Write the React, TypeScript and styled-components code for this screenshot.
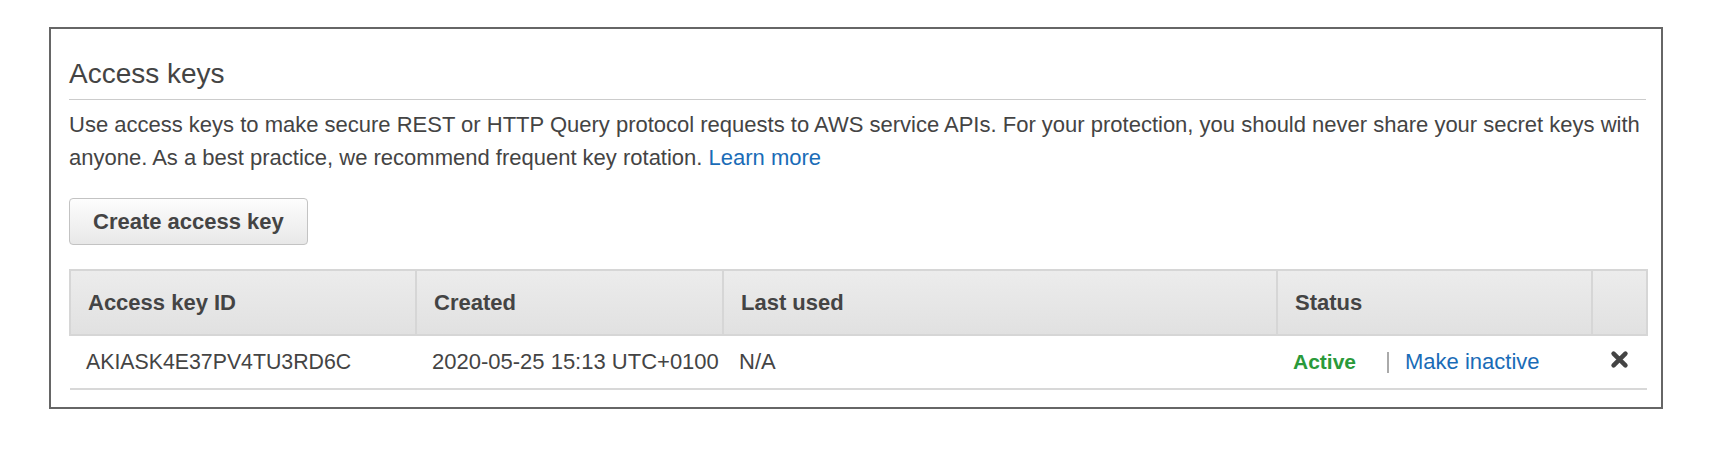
import React from "react";
import styled, { createGlobalStyle } from "styled-components";

interface AccessKey {
  id: string;
  created: string;
  lastUsed: string;
  active: boolean;
}

const keys: AccessKey[] = [
  {
    id: "AKIASK4E37PV4TU3RD6C",
    created: "2020-05-25 15:13 UTC+0100",
    lastUsed: "N/A",
    active: true,
  },
];

const columns = [
  { label: "Access key ID", width: 346 },
  { label: "Created", width: 307 },
  { label: "Last used", width: 554 },
  { label: "Status", width: 315 },
  { label: "", width: 55 },
];

const GlobalStyle = createGlobalStyle`
  html, body {
    margin: 0;
    padding: 0;
    background: #fff;
  }
  body {
    font-family: "Liberation Sans", Arial, Helvetica, sans-serif;
    color: #444;
  }
`;

const RemoveIcon = () => (
  <svg width="19" height="19" viewBox="0 0 16 16" aria-hidden="true">
    <path
      d="M3 3 L13 13 M13 3 L3 13"
      stroke="#444"
      strokeWidth="3.8"
      strokeLinecap="round"
    />
  </svg>
);

const App: React.FC = () => {
  return (
    <>
      <GlobalStyle />
      <Page>
        <Panel>
          <PanelTitle>Access keys</PanelTitle>
          <Description>
            Use access keys to make secure REST or HTTP Query protocol requests
            to AWS service APIs. For your protection, you should never share
            your secret keys with anyone. As a best practice, we recommend
            frequent key rotation. <TextLink href="#">Learn more</TextLink>
          </Description>
          <CreateButton type="button">Create access key</CreateButton>
          <KeyTable>
            <colgroup>
              {columns.map((col, index) => (
                <col key={index} style={{ width: col.width }} />
              ))}
            </colgroup>
            <thead>
              <tr>
                {columns.map((col, index) => (
                  <HeadCell key={index}>{col.label}</HeadCell>
                ))}
              </tr>
            </thead>
            <tbody>
              {keys.map((key) => (
                <tr key={key.id}>
                  <KeyIdCell>{key.id}</KeyIdCell>
                  <BodyCell>{key.created}</BodyCell>
                  <BodyCell>{key.lastUsed}</BodyCell>
                  <BodyCell>
                    <StatusBox>
                      <StatusText $active={key.active}>
                        {key.active ? "Active" : "Inactive"}
                      </StatusText>
                      <Divider />
                      <TextLink href="#">
                        {key.active ? "Make inactive" : "Make active"}
                      </TextLink>
                    </StatusBox>
                  </BodyCell>
                  <IconCell>
                    <DeleteButton type="button" aria-label="Delete">
                      <RemoveIcon />
                    </DeleteButton>
                  </IconCell>
                </tr>
              ))}
            </tbody>
          </KeyTable>
        </Panel>
      </Page>
    </>
  );
};

const Page = styled.div`
  padding: 27px 0 0 49px;
`;

const Panel = styled.section`
  width: 1614px;
  box-sizing: border-box;
  border: 2px solid #666;
  padding: 29px 15px 17px 18px;
`;

const PanelTitle = styled.h2`
  margin: 0;
  padding-bottom: 9px;
  border-bottom: 1px solid #ccc;
  font-size: 28px;
  font-weight: 400;
  line-height: 32px;
  color: #444;
`;

const Description = styled.p`
  margin: 8px 0 0;
  font-size: 22px;
  line-height: 33px;
  color: #444;
`;

const TextLink = styled.a`
  color: #1a6cb7;
  text-decoration: none;
  &:hover {
    text-decoration: underline;
  }
`;

const CreateButton = styled.button`
  display: block;
  height: 47px;
  margin-top: 24px;
  padding: 0 23px;
  border: 1px solid #c3c3c3;
  border-radius: 4px;
  background: linear-gradient(#fdfdfd, #e8e8e8);
  font-family: inherit;
  font-size: 22px;
  font-weight: 700;
  color: #444;
  cursor: pointer;
`;

const KeyTable = styled.table`
  width: 100%;
  margin-top: 24px;
  border-collapse: collapse;
  table-layout: fixed;
`;

const HeadCell = styled.th`
  height: 63px;
  padding: 0 17px;
  border: 2px solid #d6d6d6;
  background: linear-gradient(#ececec, #e1e1e1);
  text-align: left;
  font-size: 22px;
  font-weight: 700;
  color: #444;
`;

const BodyCell = styled.td`
  height: 52px;
  padding: 0 16px;
  border-bottom: 2px solid #d8d8d8;
  font-size: 22px;
  color: #444;
  white-space: nowrap;
  overflow: visible;
`;

const KeyIdCell = styled(BodyCell)`
  font-size: 21.3px;
`;

const IconCell = styled(BodyCell)`
  padding: 0;
  text-align: center;
`;

const StatusBox = styled.div`
  display: flex;
  align-items: center;
`;

const StatusText = styled.span<{ $active: boolean }>`
  font-size: 21px;
  font-weight: 700;
  color: ${({ $active }) => ($active ? "#2a9a3a" : "#888")};
`;

const Divider = styled.span`
  display: inline-block;
  width: 2px;
  height: 21px;
  margin: 0 16px 0 31px;
  background: #aaa;
`;

const DeleteButton = styled.button`
  display: inline-flex;
  align-items: center;
  justify-content: center;
  padding: 0;
  border: 0;
  background: none;
  cursor: pointer;
`;

export default App;
